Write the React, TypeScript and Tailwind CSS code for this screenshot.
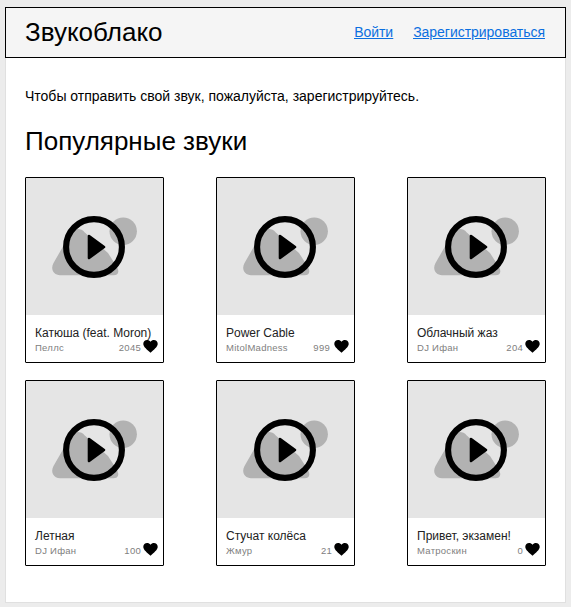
type Sound = { title: string; author: string; likes: number; gap: string };

const sounds: Sound[] = [
  { title: 'Катюша (feat. Moron)', author: 'Пеллс', likes: 2045, gap: 'mr-[2px]' },
  { title: 'Power Cable', author: 'MitolMadness', likes: 999, gap: 'mr-[4px]' },
  { title: 'Облачный жаз', author: 'DJ Ифан', likes: 204, gap: 'mr-[2px]' },
  { title: 'Летная', author: 'DJ Ифан', likes: 100, gap: 'mr-[2px]' },
  { title: 'Стучат колёса', author: 'Жмур', likes: 21, gap: 'mr-[2px]' },
  { title: 'Привет, экзамен!', author: 'Матроскин', likes: 0, gap: 'mr-[2px]' },
];

function Cover() {
  return (
    <svg className="block h-[137px] w-[137px] bg-[#e5e5e5]" viewBox="0 0 137 137">
      <path
        d="M45.2 54.3C48 50 55.5 50 58.5 54.3L82 75L91.3 89.5Q94.5 97 87.5 97.2H34C28 97.2 24 91.5 27.5 85Z"
        fill="#b2b2b2"
      />
      <circle cx="97.2" cy="53.2" r="13.7" fill="#b2b2b2" />
      <circle cx="68" cy="69" r="27.9" fill="none" stroke="#000" strokeWidth="6.1" />
      <path d="M63 58L78 69L63 80Z" fill="#000" stroke="#000" strokeWidth="2.6" strokeLinejoin="round" />
    </svg>
  );
}

function Heart() {
  return (
    <svg className="block h-[14px] w-[15px] shrink-0" viewBox="0 -0.4 15 14">
      <path
        d="M7.5 13.4L6.4 12.4C2.5 8.9.3 7 .3 4.4C.3 2.3 2 .7 4.1.7C5.4.7 6.7 1.3 7.5 2.3C8.3 1.3 9.6.7 10.9.7C13 .7 14.7 2.3 14.7 4.4C14.7 7 12.5 8.9 8.6 12.4Z"
        fill="#000"
      />
    </svg>
  );
}

function Card({ title, author, likes, gap }: Sound) {
  return (
    <article className="h-[186px] w-[139px] rounded-[1px] border border-black bg-white">
      <Cover />
      <div className="pt-[11px] pr-[5px] pl-[9px]">
        <h3 className="h-[13px] text-[12px] leading-[14px] whitespace-nowrap text-[#222]">{title}</h3>
        <div className="flex h-[14px] items-start text-[9.5px] leading-[14px] tracking-[0.27px] text-[#808080]">
          <span className="flex-1 pt-[2px]">{author}</span>
          <span className={`${gap} pt-[2px]`}>{likes}</span>
          <Heart />
        </div>
      </div>
    </article>
  );
}

export default function App() {
  return (
    <div className="h-[607px] w-[571px] bg-[#ececec] px-[5px] pt-[7px] font-['Liberation_Sans',Arial,sans-serif] text-black">
      <div className="h-[596px] w-[561px] border border-t-0 border-[#e0e0e0] bg-white">
        <header className="-mx-px flex h-[51px] items-center justify-between border border-black bg-[#f5f5f5] pr-[20px] pb-[2px] pl-[19px]">
          <h1 className="text-[26px] leading-[30px]">Звукоблако</h1>
          <nav className="flex gap-5 text-[14px] leading-4 tracking-[-0.03px] text-[#0b6fe0] underline">
            <a href="#login">Войти</a>
            <a href="#register">Зарегистрироваться</a>
          </nav>
        </header>
        <main className="px-[19px] pt-[30px]">
          <p className="text-[14px] leading-4">Чтобы отправить свой звук, пожалуйста, зарегистрируйтесь.</p>
          <h2 className="mt-[22px] text-[26px] leading-[30px]">Популярные звуки</h2>
          <section className="mt-[21px] grid w-[521px] grid-cols-[139px_139px_139px] justify-between gap-y-[17px]">
            {sounds.map((sound) => (
              <Card key={sound.title} {...sound} />
            ))}
          </section>
        </main>
      </div>
    </div>
  );
}
